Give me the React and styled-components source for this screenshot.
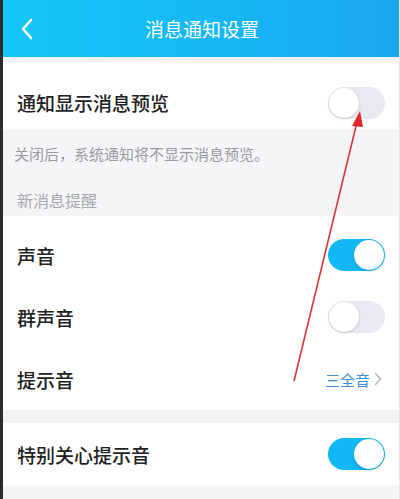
import React from 'react';
import styled, { createGlobalStyle } from 'styled-components';

const GlobalStyle = createGlobalStyle`
  html, body {
    margin: 0;
    padding: 0;
    background: #f5f5f8;
  }
  body {
    font-family: "Noto Sans CJK SC", "Noto Sans", sans-serif;
  }
`;

const Screen = styled.div`
  position: relative;
  width: 400px;
  height: 499px;
  overflow: hidden;
  background: #f5f5f8;
  box-sizing: border-box;
  border-left: 3px solid #2b2b2b;
  border-right: 1px solid #e6e6ea;
`;

const Header = styled.div`
  height: 57px;
  display: flex;
  align-items: center;
  justify-content: center;
  position: relative;
  background: linear-gradient(90deg, #12c6f7 0%, #16b7f5 55%, #1ba6f1 100%);
`;

const BackButton = styled.div`
  position: absolute;
  left: 14px;
  top: 17px;
  width: 20px;
  height: 24px;
  display: flex;
  align-items: center;
  justify-content: center;
`;

const Title = styled.div`
  color: #fff;
  font-size: 19px;
  margin-left: 2px;
`;

const Strip = styled.div`
  height: ${p => p.h}px;
  background: #f3f3f6;
`;

const Group = styled.div`
  background: #fff;
  padding-top: ${p => p.pt || 0}px;
`;

const Row = styled.div`
  height: ${p => p.h || 62}px;
  box-sizing: border-box;
  padding: ${p => p.pt || 0}px 14px 0 14px;
  display: flex;
  align-items: center;
  justify-content: space-between;
`;

const Label = styled.div`
  font-size: 19px;
  font-weight: 500;
  color: #222;
`;

const Info = styled.div`
  height: 87px;
  box-sizing: border-box;
  padding: 12px 11px 0;
  display: flex;
  flex-direction: column;
`;

const Note = styled.div`
  font-size: 15px;
  color: #9a9aa2;
  line-height: 26px;
`;

const Section = styled.div`
  font-size: 16px;
  color: #a8a8b0;
  margin-top: 21px;
  padding-left: 3px;
`;

const Track = styled.div`
  width: 57px;
  height: 32px;
  border-radius: 16px;
  box-sizing: border-box;
  background: ${p => (p.on ? '#12b7f5' : '#e9e9f1')};
  position: relative;
  flex-shrink: 0;
`;

const Knob = styled.div`
  position: absolute;
  top: 1px;
  left: ${p => (p.on ? '26px' : '1px')};
  width: 30px;
  height: 30px;
  border-radius: 50%;
  background: #fff;
  box-shadow: 0 1px 3px rgba(0, 0, 0, 0.18);
`;

const Value = styled.div`
  display: flex;
  align-items: center;
  gap: 4px;
  padding-right: 3px;
  color: #3d8fd9;
  font-size: 15px;
`;

const Overlay = styled.svg`
  position: absolute;
  left: 0;
  top: 0;
  pointer-events: none;
`;

const Switch = ({ on }) => (
  <Track on={on}>
    <Knob on={on} />
  </Track>
);

export default function App() {
  return (
    <>
      <GlobalStyle />
      <Screen>
        <Header>
          <BackButton>
            <svg width="12" height="22" viewBox="0 0 12 22">
              <path d="M10 2 L2 11 L10 20" fill="none" stroke="#fff" strokeWidth="2.6" strokeLinecap="round" strokeLinejoin="round" />
            </svg>
          </BackButton>
          <Title>消息通知设置</Title>
        </Header>
        <Strip h={5} />
        <Group>
          <Row h={67} pt={14}>
            <Label>通知显示消息预览</Label>
            <Switch on={false} />
          </Row>
        </Group>
        <Info>
          <Note>关闭后，系统通知将不显示消息预览。</Note>
          <Section>新消息提醒</Section>
        </Info>
        <Group pt={8}>
          <Row>
            <Label>声音</Label>
            <Switch on />
          </Row>
          <Row>
            <Label>群声音</Label>
            <Switch on={false} />
          </Row>
          <Row>
            <Label>提示音</Label>
            <Value>
              三全音
              <svg width="8" height="14" viewBox="0 0 8 14">
                <path d="M1.5 1.5 L6.5 7 L1.5 12.5" fill="none" stroke="#b8b8c0" strokeWidth="1.6" strokeLinecap="round" />
              </svg>
            </Value>
          </Row>
        </Group>
        <Strip h={13} />
        <Group>
          <Row>
            <Label>特别关心提示音</Label>
            <Switch on />
          </Row>
        </Group>
        <Overlay width="400" height="499" viewBox="0 0 400 499">
          <line x1="291" y1="381" x2="354" y2="122" stroke="#d9363a" strokeWidth="1.6" />
          <polygon points="357,111 349,126 360,127" fill="#e0282c" />
        </Overlay>
      </Screen>
    </>
  );
}
